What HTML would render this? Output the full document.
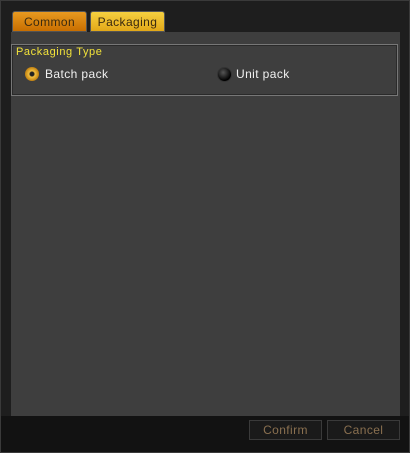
<!DOCTYPE html>
<html><head><style>
body{margin:0;width:410px;height:453px;background:#3a3a3a;font-family:"Liberation Sans",sans-serif;position:relative;overflow:hidden}
.in{position:absolute;left:1px;top:1px;width:408px;height:451px;background:#1e1e1e}
.tab{position:absolute;top:11px;height:21px;width:75px;border-radius:3px 3px 0 0;font-size:12px;line-height:20px;text-align:center;color:#3a2a10;box-sizing:border-box;border:1px solid #555;letter-spacing:0.4px}
.panel{position:absolute;left:11px;top:32px;width:389px;height:384px;background:#3e3e3e}
.grp{position:absolute;left:11px;top:44px;width:387px;height:52px;border:1px solid #777;box-sizing:border-box;outline:1px solid #2a2a2a;outline-offset:-2px}
.bot{position:absolute;left:1px;top:416px;width:408px;height:36px;background:#121212}
.btn{position:absolute;top:420px;height:18px;border:1px solid #3a3a3a;background:#1a1a1a;color:#8a7050;font-size:12px;line-height:18px;text-align:center;letter-spacing:0.4px}
.lbl{position:absolute;font-size:12px;color:#f0f0f0;letter-spacing:0.4px}
</style></head><body>
<div class="in"></div>
<div class="tab" style="left:12px;background:linear-gradient(#e89a20,#c86e00)">Common</div>
<div class="tab" style="left:90px;background:linear-gradient(#f6d040,#e2a818)">Packaging</div>
<div class="panel"></div>
<div class="grp"></div>
<div class="lbl" style="left:16px;top:46px;color:#f2e23a;font-size:11px;letter-spacing:0.6px">Packaging Type</div>
<div style="position:absolute;left:25px;top:67px;width:14px;height:14px;border-radius:50%;background:radial-gradient(circle,#222 0 2px,#f4c040 3px,#c08010 7px)"></div>
<div class="lbl" style="left:45px;top:67px">Batch pack</div>
<div style="position:absolute;left:217px;top:67px;width:13px;height:13px;border-radius:50%;background:radial-gradient(circle at 40% 35%,#555,#000 70%);border:1px solid #333"></div>
<div class="lbl" style="left:236px;top:67px">Unit pack</div>
<div class="bot"></div>
<div class="btn" style="left:249px;width:71px">Confirm</div>
<div class="btn" style="left:327px;width:71px">Cancel</div>
</body></html>
